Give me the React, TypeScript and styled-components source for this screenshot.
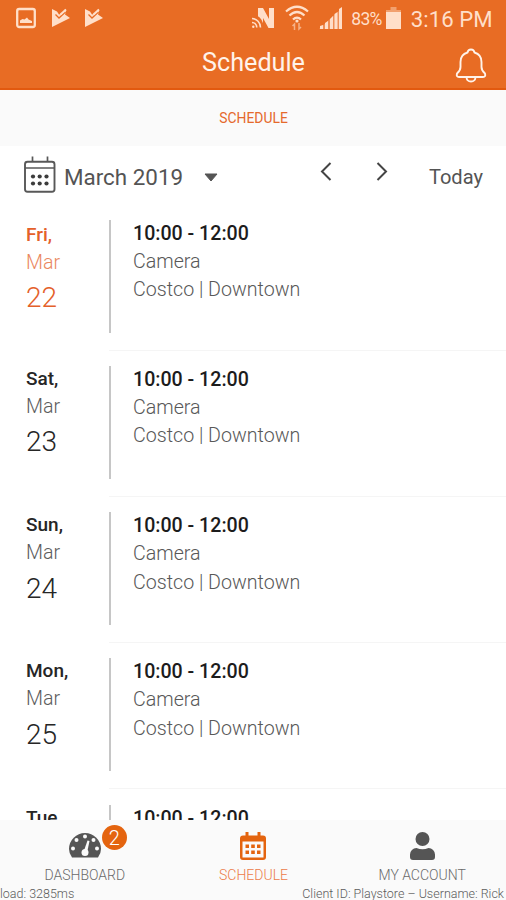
import React from "react";
import styled, { createGlobalStyle } from "styled-components";

const GlobalStyle = createGlobalStyle`
  * { box-sizing: border-box; }
  html, body { margin: 0; padding: 0; }
  body { background: #fff; font-family: Roboto, "Liberation Sans", sans-serif; }
  svg { display: block; flex: none; }
`;

const Screen = styled.div`
  width: 506px;
  height: 900px;
  display: flex;
  flex-direction: column;
  overflow: hidden;
  background: #fff;
`;

const Header = styled.header`
  height: 90px;
  flex: none;
  background: #e86c24;
  border-bottom: 2px solid #e2590f;
`;

const StatusBar = styled.div`
  height: 36px;
  display: flex;
  justify-content: space-between;
  padding: 0 13.5px 0 16px;
  color: #ffdfc9;
`;

const StatusGroup = styled.div<{ $gap: number }>`
  display: flex;
  align-items: center;
  gap: ${(p) => p.$gap}px;
  white-space: nowrap;
`;

const BatteryLevel = styled.span`
  font-size: 17.5px;
  line-height: 20px;
  letter-spacing: -0.6px;
  margin: 2px -6px 0 -2px;
`;

const Clock = styled.span`
  font-size: 22.2px;
  line-height: 28px;
  margin: 2px 0 0 0;
`;

const TitleBar = styled.div`
  height: 52px;
  display: grid;
  grid-template-columns: 69px 1fr 69px;
`;

const Title = styled.h1`
  grid-column: 2;
  margin: 11px 0 0 1px;
  text-align: center;
  font-size: 25.2px;
  font-weight: 400;
  line-height: 32px;
  color: #fff3ea;
`;

const BellButton = styled.div`
  padding: 12px 0 0 18px;
`;

const SubTab = styled.div`
  height: 56px;
  flex: none;
  display: flex;
  align-items: center;
  justify-content: center;
  padding-left: 1px;
  background: #fafafa;
  color: #e5692c;
  font-size: 13.9px;
  font-weight: 400;
`;

const Toolbar = styled.div`
  height: 73.6px;
  flex: none;
  display: flex;
  align-items: flex-start;
  padding: 10px 23px 0 23px;
  color: #545454;
`;

const MonthLabel = styled.span`
  width: 140px;
  margin: 7px 0 0 8px;
  font-size: 22.4px;
  line-height: 28px;
  white-space: nowrap;
`;

const Arrows = styled.div`
  display: flex;
  gap: 44px;
  margin: 6px 0 0 102px;
`;

const Caret = styled.div`
  margin-top: 17px;
`;

const Today = styled.span`
  margin: 7px 0 0 auto;
  font-size: 20.1px;
  line-height: 28px;
`;

const List = styled.main`
  height: 600.4px;
  flex: none;
  overflow: hidden;
`;

const Row = styled.section`
  height: 146.25px;
  padding-left: 26px;
  display: grid;
  grid-template-columns: 83px 1fr;
`;

const DateColumn = styled.div<{ $active?: boolean }>`
  margin-top: ${(p) => (p.$active ? 1 : -1)}px;
  color: ${(p) => (p.$active ? "#e4602a" : "#262626")};
`;

const Weekday = styled.div`
  font-size: 19px;
  font-weight: 500;
  line-height: 28px;
`;

const Month = styled.div`
  font-size: 19.6px;
  font-weight: 300;
  line-height: 28.4px;
  opacity: 0.75;
`;

const DayNumber = styled.div`
  font-size: 28px;
  font-weight: 300;
  line-height: 41.2px;
`;

const EventColumn = styled.div`
  height: 131px;
  border-bottom: 1px solid #f5f5f5;
`;

const EventBody = styled.div`
  height: 113px;
  padding-left: 22px;
  border-left: 2px solid #c6c6c6;
`;

const EventTime = styled.div`
  font-size: 19.6px;
  font-weight: 500;
  line-height: 28px;
  color: #1c1c1c;
`;

const EventText = styled.div`
  font-size: 19.65px;
  font-weight: 300;
  line-height: 28.4px;
  color: #585858;
`;

const Footer = styled.footer`
  height: 80px;
  flex: none;
  background: #fafafa;
`;

const Nav = styled.nav`
  display: grid;
  grid-template-columns: repeat(3, 1fr);
  height: 65px;
`;

const NavItem = styled.div<{ $active?: boolean }>`
  display: flex;
  flex-direction: column;
  align-items: center;
  padding: 12px 0 0 1px;
  font-size: 14px;
  font-weight: 300;
  line-height: 20px;
  color: ${(p) => (p.$active ? "#ec7a48" : "#6a6a6a")};
`;

const NavIcon = styled.div`
  position: relative;
  height: 33px;
`;

const Badge = styled.span`
  position: absolute;
  left: 33px;
  top: -7px;
  width: 25px;
  height: 25px;
  border-radius: 50%;
  background: #e4640f;
  color: #fff;
  font-size: 20px;
  font-weight: 300;
  line-height: 26px;
  text-align: center;
`;

const DebugLine = styled.div`
  display: flex;
  justify-content: space-between;
  padding-right: 2px;
  font-size: 12.5px;
  font-weight: 300;
  line-height: 18px;
  color: #5c5c5c;
  white-space: nowrap;
`;

const PictureIcon = () => (
  <svg width="20" height="22" viewBox="0 0 20 22">
    <rect x="1.200" y="2" width="17.600" height="18" rx="2" fill="none" stroke="currentColor" strokeWidth="2.300" />
    <path d="M4 16v-2.500l2.500-1.500 2 .500 2.500-2 1.500 2 3.500 1.500v2z" fill="currentColor" />
  </svg>
);

const PlayCheckIcon = () => (
  <svg width="18" height="20" viewBox="0 0 18 20">
    <path d="M0 1l5 2.500 2 3 3-1 3-4 1 1.500-1 3.500 5 3.500L0 19z" fill="currentColor" />
    <path d="M3.500 6.500l3.500 3.500L13.500 4" fill="none" stroke="#e86c24" strokeWidth="1.300" />
    <path d="M8.500 6.500L14 1.500" fill="none" stroke="currentColor" strokeWidth="2" />
  </svg>
);

const NfcIcon = () => (
  <svg width="23" height="22" viewBox="0 0 23 22">
    <path d="M6 11V1h5l6 11V1h5v20h-5.500L11 11v8z" fill="currentColor" />
    <path d="M5 8.500q6 3 7 12.500H4z" fill="#e86c24" />
    <g fill="none" stroke="currentColor" strokeWidth="1.600">
      <path d="M0 11.500a9 9 0 0 1 8.500 9M0 15.500a5 5 0 0 1 4.800 5" />
    </g>
    <circle cx="1.300" cy="19.700" r="1.200" fill="currentColor" />
  </svg>
);

const WifiIcon = () => (
  <svg width="24" height="26" viewBox="0 0 24 26">
    <g fill="none" stroke="currentColor" strokeWidth="2.200">
      <path d="M1 6.500q11-9.500 22 0M4.500 10.500q7.500-7 15 0M8 14.500q4-4 8 0" />
    </g>
    <circle cx="12" cy="16" r="1.600" fill="currentColor" />
    <g opacity=".6" stroke="currentColor" strokeWidth="1.500" fill="none">
      <path d="M9.500 25v-6l-2 2M14 18v6l2-2" />
    </g>
  </svg>
);

const SignalIcon = () => (
  <svg width="24" height="22" viewBox="0 0 24 22">
    <path
      d="M1 22v-3l3-1v4zM6 22v-6l3-2v8zM11 22V12l3-3v13zM15.500 22V7l3-2v17zM20 22V2l3-2v22z"
      fill="currentColor"
    />
    <path d="M0 22L23 1v21z" fill="currentColor" opacity=".3" />
  </svg>
);

const BatteryIcon = () => (
  <svg width="15" height="22" viewBox="0 0 15 22">
    <path d="M4.500 0h6v3H15v19H0V3h4.500z" fill="currentColor" opacity=".45" />
    <path d="M0 5h15v17H0z" fill="currentColor" />
  </svg>
);

const BellIcon = () => (
  <svg width="32" height="36" viewBox="0 0 32 36" fill="none" stroke="#fff3ea" strokeWidth="1.900" strokeLinejoin="round">
    <path d="M12.500 4.500q.5-3 3.500-3t3.500 3C24.500 6 26.500 9.500 26.500 14v5q0 3.500 3.500 6.500 1 3.500-2 3.500H4q-3 0-2-3.500 3.500-3 3.500-6.500v-5C5.500 9.500 7.500 6 12.500 4.500z" />
    <path d="M11.500 29.500q.5 4 4.500 4t4.500-4" />
  </svg>
);

const CalendarOutlineIcon = () => (
  <svg width="33" height="38" viewBox="0 0 33 38" fill="none" stroke="#585858">
    <rect x="2" y="5.700" width="29.500" height="30" rx="2.500" strokeWidth="1.900" />
    <path d="M2 12h29M9.500 .5v5M24.500 .5v5" strokeWidth="1.700" />
    <g fill="#3c3c3c" stroke="none">
      <circle cx="10" cy="20.500" r="2.100" />
      <circle cx="16.700" cy="20.500" r="2.100" />
      <circle cx="23.500" cy="20.500" r="2.100" />
      <circle cx="10" cy="27.500" r="2.100" />
      <circle cx="16.700" cy="27.500" r="2.100" />
      <circle cx="23.500" cy="27.500" r="2.100" />
    </g>
  </svg>
);

const ChevronIcon = ({ right }: { right?: boolean }) => (
  <svg width="12" height="19" viewBox="0 0 12 19">
    <path d={right ? "M1.500 1L10 9.500 1.500 18" : "M10.500 1L2 9.500l8.500 8.500"} fill="none" stroke="#444" strokeWidth="2" />
  </svg>
);

const CaretIcon = () => (
  <svg width="14" height="9" viewBox="0 0 14 9">
    <path d="M1 1h12L7 8z" fill="#555" stroke="#555" strokeLinejoin="round" />
  </svg>
);

const GaugeIcon = () => (
  <svg width="32" height="26" viewBox="0 0 32 26">
    <path d="M3 25.500Q0 21.500 0 17a16 16 0 0 1 32 0q0 4.500-3 8.500z" fill="#555" />
    <g fill="#fafafa">
      <circle cx="4" cy="16.500" r="2" />
      <circle cx="7.500" cy="8" r="2" />
      <circle cx="16" cy="4.500" r="2" />
      <circle cx="24.500" cy="8" r="2" />
      <circle cx="28" cy="16.500" r="2" />
      <circle cx="16" cy="20.500" r="3.500" />
      <path d="M18.500 8.500l2 .600-2.500 12-3.500-1z" />
    </g>
  </svg>
);

const CalendarIcon = () => (
  <svg width="26" height="28" viewBox="0 0 26 28">
    <path
      fillRule="evenodd"
      d="M5.500 0h3v3.500h9V0h3v3.500H23a3 3 0 0 1 3 3V25a3 3 0 0 1-3 3H3a3 3 0 0 1-3-3V6.500a3 3 0 0 1 3-3h2.500zM2.500 9.500V25.500h21V9.500z"
      fill="#e4640f"
    />
    <path
      d="M5.500 12.500h3.500V16H5.500zM11.200 12.500h3.600V16h-3.600zM17 12.500h3.500V16H17zM5.500 18.500h3.500V22H5.500zM11.200 18.500h3.600V22h-3.600zM17 18.500h3.500V22H17z"
      fill="#e4640f"
    />
  </svg>
);

const UserIcon = () => (
  <svg width="25" height="28" viewBox="0 0 25 28" fill="#555">
    <circle cx="12.500" cy="7" r="7" />
    <path d="M0 25v-2.500a6.500 6.500 0 0 1 6.500-6.500q6 2.500 12 0a6.500 6.500 0 0 1 6.500 6.500V25q0 3-3 3H3q-3 0-3-3z" />
  </svg>
);

const days = [
  { weekday: "Fri,", day: "22", active: true },
  { weekday: "Sat,", day: "23" },
  { weekday: "Sun,", day: "24" },
  { weekday: "Mon,", day: "25" },
];

export default function App() {
  return (
    <>
      <GlobalStyle />
      <Screen>
        <Header>
          <StatusBar>
            <StatusGroup $gap={15.5}>
              <PictureIcon />
              <PlayCheckIcon />
              <PlayCheckIcon />
            </StatusGroup>
            <StatusGroup $gap={10}>
              <NfcIcon />
              <WifiIcon />
              <SignalIcon />
              <BatteryLevel>83%</BatteryLevel>
              <BatteryIcon />
              <Clock>3:16 PM</Clock>
            </StatusGroup>
          </StatusBar>
          <TitleBar>
            <Title>Schedule</Title>
            <BellButton>
              <BellIcon />
            </BellButton>
          </TitleBar>
        </Header>
        <SubTab>SCHEDULE</SubTab>
        <Toolbar>
          <CalendarOutlineIcon />
          <MonthLabel>March 2019</MonthLabel>
          <Caret>
            <CaretIcon />
          </Caret>
          <Arrows>
            <ChevronIcon />
            <ChevronIcon right />
          </Arrows>
          <Today>Today</Today>
        </Toolbar>
        <List>
          {days.map((d) => (
            <Row key={d.day}>
              <DateColumn $active={d.active}>
                <Weekday>{d.weekday}</Weekday>
                <Month>Mar</Month>
                <DayNumber>{d.day}</DayNumber>
              </DateColumn>
              <EventColumn>
                <EventBody>
                  <EventTime>10:00 - 12:00</EventTime>
                  <EventText>Camera</EventText>
                  <EventText>Costco | Downtown</EventText>
                </EventBody>
              </EventColumn>
            </Row>
          ))}
          <Row>
            <DateColumn>
              <Weekday>Tue</Weekday>
            </DateColumn>
            <EventColumn>
              <EventBody>
                <EventTime>10:00 - 12:00</EventTime>
              </EventBody>
            </EventColumn>
          </Row>
        </List>
        <Footer>
          <Nav>
            <NavItem>
              <NavIcon>
                <GaugeIcon />
                <Badge>2</Badge>
              </NavIcon>
              DASHBOARD
            </NavItem>
            <NavItem $active>
              <NavIcon>
                <CalendarIcon />
              </NavIcon>
              SCHEDULE
            </NavItem>
            <NavItem>
              <NavIcon>
                <UserIcon />
              </NavIcon>
              MY ACCOUNT
            </NavItem>
          </Nav>
          <DebugLine>
            <span>load: 3285ms</span>
            <span>Client ID: Playstore – Username: Rick</span>
          </DebugLine>
        </Footer>
      </Screen>
    </>
  );
}
